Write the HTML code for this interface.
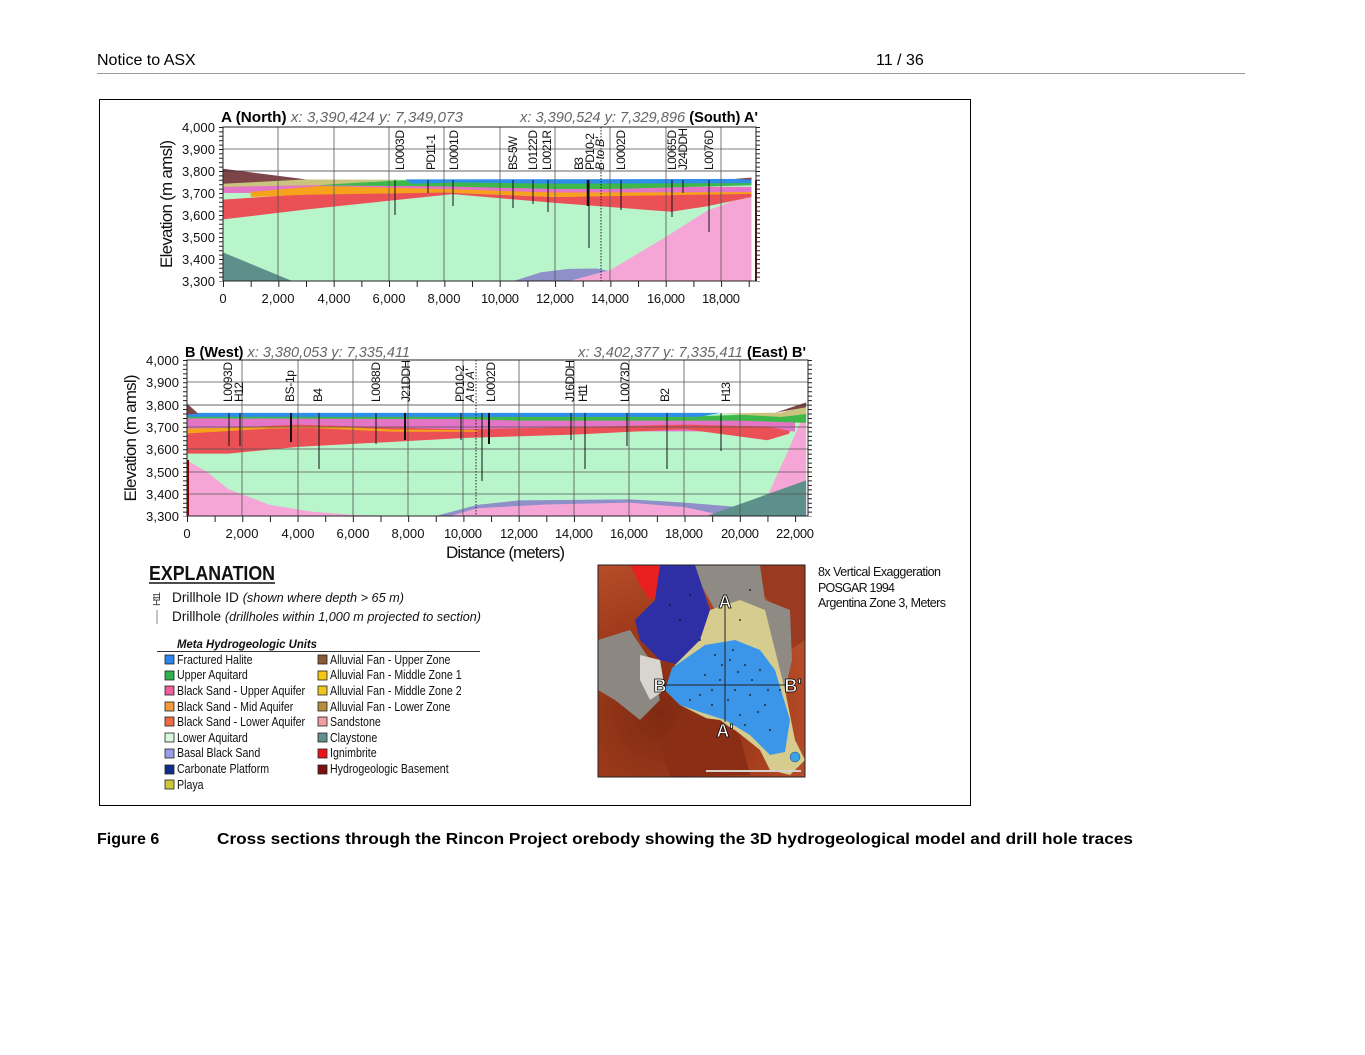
<!DOCTYPE html>
<html><head><meta charset="utf-8"><style>
html,body{margin:0;padding:0;background:#fff;}
svg{display:block;}
text{font-family:"Liberation Sans",sans-serif;}
</style></head><body>
<svg width="1365" height="1055" viewBox="0 0 1365 1055" xmlns="http://www.w3.org/2000/svg">
<rect width="1365" height="1055" fill="#fff"/>
<text x="97" y="65" font-size="16" fill="#000">Notice to ASX</text>
<text x="876" y="65" font-size="16" fill="#000">11 / 36</text>
<line x1="97" y1="73.5" x2="1245" y2="73.5" stroke="#999" stroke-width="1"/>
<rect x="99.5" y="99.5" width="871" height="706" fill="#fff" stroke="#000" stroke-width="1"/>

<!-- TOP CHART -->
<g transform="translate(223,127) scale(0.02767,0.22)">
 <rect x="0" y="240" width="19100" height="460" fill="#b9f5ca"/>
 <polygon points="0,570 0,700 2500,700" fill="#5d8f8b"/>
 <polygon points="10500,700 11500,660 12500,645 13500,643 14000,655 14000,700" fill="#8f8fc9"/>
 <polygon points="12500,700 14000,650 16000,500 17500,380 19100,305 19100,700" fill="#f6a6d6"/>
 <polygon points="0,270 4000,255 8000,268 19100,272 19100,300 0,300" fill="#e474c6"/>
 <polygon points="0,330 3000,305 8000,298 12000,318 19100,300 19100,318 17500,360 16200,385 12000,345 8300,305 6000,335 3000,375 0,420" fill="#ea5055"/>
 <polygon points="1000,295 3500,268 8000,282 12000,298 19100,296 19100,304 12000,318 8000,298 3000,308 1000,318" fill="#f6a21a"/>
 <polygon points="3500,262 6500,242 19100,242 19100,265 14000,282 12000,282 8000,270 6500,268 3500,266" fill="#3cb94a"/>
 <polygon points="6600,238 19100,236 19100,255 12000,258 8500,252 6800,258" fill="#2f8fe8"/>
 <polygon points="0,258 2500,238 6500,240 3500,264 0,272" fill="#c9c47e"/>
 <polygon points="0,190 3000,238 0,258" fill="#7d4548"/>
 <polygon points="18500,236 19100,230 19100,240" fill="#7d4548"/>
</g>
<g stroke="#555" stroke-width="0.8">
 <line x1="223" y1="149" x2="756" y2="149"/>
 <line x1="223" y1="171" x2="756" y2="171" stroke="#333"/>
 <line x1="278" y1="127" x2="278" y2="281"/><line x1="334" y1="127" x2="334" y2="281"/>
 <line x1="389" y1="127" x2="389" y2="281"/><line x1="444" y1="127" x2="444" y2="281"/>
 <line x1="500" y1="127" x2="500" y2="281"/><line x1="555" y1="127" x2="555" y2="281"/>
 <line x1="610" y1="127" x2="610" y2="281"/><line x1="666" y1="127" x2="666" y2="281"/>
 <line x1="721" y1="127" x2="721" y2="281"/>
</g>
<g stroke="#111" stroke-width="1">
 <line x1="395" y1="180" x2="395" y2="215"/><line x1="428" y1="180" x2="428" y2="193"/>
 <line x1="453" y1="180" x2="453" y2="206"/><line x1="513" y1="180" x2="513" y2="208"/>
 <line x1="533" y1="180" x2="533" y2="204"/><line x1="548" y1="180" x2="548" y2="212"/>
 <line x1="588" y1="180" x2="588" y2="206" stroke-width="2.5"/><line x1="589" y1="180" x2="589" y2="248"/>
 <line x1="621" y1="180" x2="621" y2="210"/><line x1="672" y1="180" x2="672" y2="217"/>
 <line x1="683" y1="180" x2="683" y2="193"/><line x1="709" y1="180" x2="709" y2="232"/>
 <line x1="756" y1="180" x2="756" y2="281" stroke="#8b0000" stroke-width="2"/>
</g>
<line x1="601" y1="127" x2="601" y2="281" stroke="#222" stroke-width="1" stroke-dasharray="1.5 1.5"/>
<rect x="223" y="127" width="533" height="154" fill="none" stroke="#222" stroke-width="1"/>
<line x1="221" y1="127" x2="221" y2="281.5" stroke="#222" stroke-width="4" stroke-dasharray="1 3.4"/>
<line x1="758" y1="127" x2="758" y2="281.5" stroke="#222" stroke-width="4" stroke-dasharray="1 3.4"/>
<line x1="223" y1="284" x2="760" y2="284" stroke="#222" stroke-width="6" stroke-dasharray="1 26.67"/>
<g font-size="13" fill="#111" text-anchor="end">
 <text x="215" y="132" textLength="33">4,000</text><text x="215" y="154" textLength="33">3,900</text><text x="215" y="176" textLength="33">3,800</text>
 <text x="215" y="198" textLength="33">3,700</text><text x="215" y="220" textLength="33">3,600</text><text x="215" y="242" textLength="33">3,500</text>
 <text x="215" y="264" textLength="33">3,400</text><text x="215" y="286" textLength="33">3,300</text>
</g>
<g font-size="13" fill="#111" text-anchor="middle">
 <text x="223" y="303">0</text><text x="278" y="303" textLength="33">2,000</text><text x="334" y="303" textLength="33">4,000</text>
 <text x="389" y="303" textLength="33">6,000</text><text x="444" y="303" textLength="33">8,000</text><text x="500" y="303" textLength="38">10,000</text>
 <text x="555" y="303" textLength="38">12,000</text><text x="610" y="303" textLength="38">14,000</text><text x="666" y="303" textLength="38">16,000</text>
 <text x="721" y="303" textLength="38">18,000</text>
</g>
<text transform="translate(172,204) rotate(-90)" font-size="17" text-anchor="middle" fill="#111" textLength="128">Elevation (m amsl)</text>
<text x="221" y="122" font-size="15" fill="#000" textLength="242" lengthAdjust="spacingAndGlyphs"><tspan font-weight="bold">A (North)</tspan><tspan fill="#666" font-style="italic"> x: 3,390,424   y: 7,349,073</tspan></text>
<text x="520" y="122" font-size="15" fill="#000" textLength="238" lengthAdjust="spacingAndGlyphs"><tspan fill="#666" font-style="italic">x: 3,390,524   y: 7,329,896 </tspan><tspan font-weight="bold">(South) A'</tspan></text>
<g font-size="12" fill="#111" lengthAdjust="spacingAndGlyphs">
 <text transform="translate(404,170) rotate(-90)" textLength="40">L0003D</text>
 <text transform="translate(435,170) rotate(-90)" textLength="36">PD11-1</text>
 <text transform="translate(458,170) rotate(-90)" textLength="40">L0001D</text>
 <text transform="translate(517,170) rotate(-90)" textLength="34">BS-5W</text>
 <text transform="translate(537,170) rotate(-90)" textLength="40">L0122D</text>
 <text transform="translate(551,170) rotate(-90)" textLength="40">L0021R</text>
 <text transform="translate(583,170) rotate(-90)" textLength="13">B3</text>
 <text transform="translate(594,170) rotate(-90)" textLength="37">PD10-2</text>
 <text transform="translate(604,170) rotate(-90)" font-style="italic" textLength="33">B to B'</text>
 <text transform="translate(625,170) rotate(-90)" textLength="40">L0002D</text>
 <text transform="translate(676,170) rotate(-90)" textLength="40">L0065D</text>
 <text transform="translate(687,170) rotate(-90)" textLength="42">J24DDH</text>
 <text transform="translate(713,170) rotate(-90)" textLength="40">L0076D</text>
</g>

<!-- BOTTOM CHART -->
<g transform="translate(187,360) scale(0.02764,0.2229)">
 <rect x="0" y="240" width="22400" height="460" fill="#b9f5ca"/>
 <polygon points="0,450 700,500 1500,580 3000,650 4500,680 6000,695 8000,700 0,700" fill="#f6a6d6"/>
 <polygon points="9000,700 10500,650 12000,630 16000,625 18000,640 20000,660 20500,700" fill="#8f8fc9"/>
 <polygon points="9500,700 10500,665 13000,648 16000,640 18000,660 19500,700" fill="#f6a6d6"/>
 <polygon points="20400,700 21000,610 21700,420 22400,220 22400,700" fill="#f6a6d6"/>
 <polygon points="18800,700 22400,540 22400,700" fill="#5d8f8b"/>
 <polygon points="0,255 22000,258 22000,320 0,320" fill="#e474c6"/>
 <polygon points="0,312 4000,290 10000,312 18000,290 21000,298 21800,318 21800,330 21000,360 18000,310 14000,335 10000,350 4000,390 1500,420 0,420" fill="#ea5055"/>
 <polygon points="0,308 3000,300 5000,298 7500,312 10500,315 10500,322 7500,322 4500,305 3000,308 0,330" fill="#f6a21a"/>
 <polygon points="0,250 19000,250 21500,240 22400,235 22400,282 20000,272 12000,272 10000,265 0,262" fill="#3cb94a"/>
 <polygon points="0,237 19300,237 18500,255 0,255" fill="#2f8fe8"/>
 <polygon points="19300,240 21500,236 22400,205 22400,242 21500,256" fill="#c9c47e"/>
 <polygon points="21300,236 22400,190 22400,212" fill="#7d4548"/>
 <polygon points="0,195 400,240 0,245" fill="#7d4548"/>
</g>
<g stroke="#555" stroke-width="0.8">
 <line x1="187" y1="382" x2="808" y2="382"/>
 <line x1="187" y1="405" x2="808" y2="405" stroke="#333"/>
 <line x1="187" y1="427" x2="808" y2="427"/><line x1="187" y1="449" x2="808" y2="449"/>
 <line x1="187" y1="472" x2="808" y2="472"/><line x1="187" y1="494" x2="808" y2="494"/>
 <line x1="242" y1="360" x2="242" y2="516"/><line x1="298" y1="360" x2="298" y2="516"/>
 <line x1="353" y1="360" x2="353" y2="516"/><line x1="408" y1="360" x2="408" y2="516"/>
 <line x1="463" y1="360" x2="463" y2="516"/><line x1="519" y1="360" x2="519" y2="516"/>
 <line x1="574" y1="360" x2="574" y2="516"/><line x1="629" y1="360" x2="629" y2="516"/>
 <line x1="684" y1="360" x2="684" y2="516"/><line x1="740" y1="360" x2="740" y2="516"/>
</g>
<g stroke="#111" stroke-width="1">
 <line x1="229" y1="413" x2="229" y2="446"/><line x1="240" y1="413" x2="240" y2="446"/>
 <line x1="291" y1="413" x2="291" y2="442" stroke-width="2"/><line x1="319" y1="413" x2="319" y2="469"/>
 <line x1="376" y1="413" x2="376" y2="444"/><line x1="405" y1="413" x2="405" y2="440" stroke-width="2"/>
 <line x1="461" y1="413" x2="461" y2="440"/><line x1="482" y1="413" x2="482" y2="481"/>
 <line x1="489" y1="413" x2="489" y2="444" stroke-width="2"/><line x1="571" y1="413" x2="571" y2="440"/>
 <line x1="585" y1="413" x2="585" y2="469"/><line x1="627" y1="413" x2="627" y2="446"/>
 <line x1="667" y1="413" x2="667" y2="469"/><line x1="721" y1="413" x2="721" y2="451"/>
 <line x1="188" y1="460" x2="188" y2="516" stroke="#8b0000" stroke-width="2"/>
</g>
<line x1="476" y1="360" x2="476" y2="516" stroke="#222" stroke-width="1" stroke-dasharray="1.5 1.5"/>
<rect x="187" y="360" width="621" height="156" fill="none" stroke="#222" stroke-width="1"/>
<line x1="185" y1="360" x2="185" y2="516.5" stroke="#222" stroke-width="4" stroke-dasharray="1 3.46"/>
<line x1="810" y1="360" x2="810" y2="516.5" stroke="#222" stroke-width="4" stroke-dasharray="1 3.46"/>
<line x1="187" y1="519" x2="810" y2="519" stroke="#222" stroke-width="6" stroke-dasharray="1 26.64"/>
<g font-size="13" fill="#111" text-anchor="end">
 <text x="179" y="365" textLength="33">4,000</text><text x="179" y="387" textLength="33">3,900</text><text x="179" y="410" textLength="33">3,800</text>
 <text x="179" y="432" textLength="33">3,700</text><text x="179" y="454" textLength="33">3,600</text><text x="179" y="477" textLength="33">3,500</text>
 <text x="179" y="499" textLength="33">3,400</text><text x="179" y="521" textLength="33">3,300</text>
</g>
<g font-size="13" fill="#111" text-anchor="middle">
 <text x="187" y="538">0</text><text x="242" y="538" textLength="33">2,000</text><text x="298" y="538" textLength="33">4,000</text>
 <text x="353" y="538" textLength="33">6,000</text><text x="408" y="538" textLength="33">8,000</text><text x="463" y="538" textLength="38">10,000</text>
 <text x="519" y="538" textLength="38">12,000</text><text x="574" y="538" textLength="38">14,000</text><text x="629" y="538" textLength="38">16,000</text>
 <text x="684" y="538" textLength="38">18,000</text><text x="740" y="538" textLength="38">20,000</text><text x="795" y="538" textLength="38">22,000</text>
</g>
<text x="446" y="558" font-size="17" fill="#111" textLength="119">Distance (meters)</text>
<text transform="translate(136,438) rotate(-90)" font-size="17" text-anchor="middle" fill="#111" textLength="127">Elevation (m amsl)</text>
<text x="185" y="357" font-size="15" fill="#000" textLength="225" lengthAdjust="spacingAndGlyphs"><tspan font-weight="bold">B (West)</tspan><tspan fill="#666" font-style="italic"> x: 3,380,053   y: 7,335,411</tspan></text>
<text x="578" y="357" font-size="15" fill="#000" textLength="228" lengthAdjust="spacingAndGlyphs"><tspan fill="#666" font-style="italic">x: 3,402,377   y: 7,335,411 </tspan><tspan font-weight="bold">(East) B'</tspan></text>
<g font-size="12" fill="#111">
 <text transform="translate(232,402) rotate(-90)" textLength="40">L0093D</text>
 <text transform="translate(243,402) rotate(-90)" textLength="20">H12</text>
 <text transform="translate(294,402) rotate(-90)" textLength="32">BS-1p</text>
 <text transform="translate(322,402) rotate(-90)" textLength="14">B4</text>
 <text transform="translate(380,402) rotate(-90)" textLength="40">L0088D</text>
 <text transform="translate(410,402) rotate(-90)" textLength="42">J21DDH</text>
 <text transform="translate(464,402) rotate(-90)" textLength="37">PD10-2</text>
 <text transform="translate(474,402) rotate(-90)" font-style="italic" textLength="33">A to A'</text>
 <text transform="translate(495,402) rotate(-90)" textLength="40">L0002D</text>
 <text transform="translate(574,402) rotate(-90)" textLength="42">J16DDH</text>
 <text transform="translate(587,402) rotate(-90)" textLength="18">H11</text>
 <text transform="translate(629,402) rotate(-90)" textLength="40">L0073D</text>
 <text transform="translate(669,402) rotate(-90)" textLength="14">B2</text>
 <text transform="translate(730,402) rotate(-90)" textLength="20">H13</text>
</g>

<!-- EXPLANATION -->
<text x="149" y="580" font-size="20" font-weight="bold" fill="#111" textLength="126" lengthAdjust="spacingAndGlyphs">EXPLANATION</text>
<line x1="149" y1="583" x2="275" y2="583" stroke="#111" stroke-width="1.5"/>
<text transform="translate(160,606) rotate(-90)" font-size="10" fill="#333" textLength="14">H11</text>
<line x1="157" y1="610" x2="157" y2="624" stroke="#888" stroke-width="1"/>
<text x="172" y="602" font-size="14" fill="#111" textLength="232" lengthAdjust="spacingAndGlyphs">Drillhole ID <tspan font-style="italic" font-size="13">(shown where depth &gt; 65 m)</tspan></text>
<text x="172" y="621" font-size="14" fill="#111" textLength="309" lengthAdjust="spacingAndGlyphs">Drillhole <tspan font-style="italic" font-size="13">(drillholes within 1,000 m projected to section)</tspan></text>
<text x="177" y="648" font-size="12" font-weight="bold" font-style="italic" fill="#111" textLength="140" lengthAdjust="spacingAndGlyphs">Meta Hydrogeologic Units</text>
<line x1="157" y1="651.5" x2="480" y2="651.5" stroke="#333" stroke-width="1"/>
<g stroke="#222" stroke-width="0.8">
 <rect x="165" y="655" width="9" height="9" fill="#2a86ee"/><rect x="165" y="671" width="9" height="9" fill="#2fb24c"/>
 <rect x="165" y="686" width="9" height="9" fill="#ef5f9c"/><rect x="165" y="702" width="9" height="9" fill="#f59a3a"/>
 <rect x="165" y="717" width="9" height="9" fill="#ee6842"/><rect x="165" y="733" width="9" height="9" fill="#d6f7d8"/>
 <rect x="165" y="749" width="9" height="9" fill="#9a9ee8"/><rect x="165" y="765" width="9" height="9" fill="#0f2e8c"/>
 <rect x="165" y="780" width="9" height="9" fill="#cbc83a"/>
 <rect x="318" y="655" width="9" height="9" fill="#8a5a36"/><rect x="318" y="671" width="9" height="9" fill="#f3c712"/>
 <rect x="318" y="686" width="9" height="9" fill="#f2c51c"/><rect x="318" y="702" width="9" height="9" fill="#b98e3c"/>
 <rect x="318" y="717" width="9" height="9" fill="#f0a0a0"/><rect x="318" y="733" width="9" height="9" fill="#5e918d"/>
 <rect x="318" y="749" width="9" height="9" fill="#e8141a"/><rect x="318" y="765" width="9" height="9" fill="#7d0f10"/>
</g>
<g transform="translate(177,0) scale(0.85,1)" font-size="12.5" fill="#111">
 <text x="0" y="664">Fractured Halite</text><text x="0" y="679">Upper Aquitard</text>
 <text x="0" y="695">Black Sand - Upper Aquifer</text><text x="0" y="711">Black Sand - Mid Aquifer</text>
 <text x="0" y="726">Black Sand - Lower Aquifer</text><text x="0" y="742">Lower Aquitard</text>
 <text x="0" y="757">Basal Black Sand</text><text x="0" y="773">Carbonate Platform</text><text x="0" y="789">Playa</text>
</g>
<g transform="translate(330,0) scale(0.85,1)" font-size="12.5" fill="#111">
 <text x="0" y="664">Alluvial Fan - Upper Zone</text><text x="0" y="679">Alluvial Fan - Middle Zone 1</text>
 <text x="0" y="695">Alluvial Fan - Middle Zone 2</text><text x="0" y="711">Alluvial Fan - Lower Zone</text>
 <text x="0" y="726">Sandstone</text><text x="0" y="742">Claystone</text>
 <text x="0" y="757">Ignimbrite</text><text x="0" y="773">Hydrogeologic Basement</text>
</g>

<!-- MAP -->
<defs><clipPath id="mc"><rect x="598" y="565" width="207" height="212"/></clipPath>
<radialGradient id="rg" cx="0.3" cy="0.7" r="0.8"><stop offset="0" stop-color="#7e2a12"/><stop offset="0.6" stop-color="#a33d1c"/><stop offset="1" stop-color="#b9502c"/></radialGradient></defs>
<g clip-path="url(#mc)">
 <rect x="598" y="565" width="207" height="212" fill="url(#rg)"/>
 <polygon points="630,565 660,565 665,590 650,600 640,585" fill="#e82020"/>
 <polygon points="755,565 805,565 805,640 790,650 775,610 760,590" fill="#9a3a20"/>
 <polygon points="598,640 630,630 650,660 660,700 640,720 615,700 598,690" fill="#8d8782"/>
 <polygon points="640,655 660,660 665,690 650,700 640,680" fill="#d8d4d0"/>
 <polygon points="690,565 760,565 765,600 790,610 792,660 785,690 770,640 740,600 715,610" fill="#8f8a84"/>
 <polygon points="660,565 695,565 710,610 700,640 680,665 660,660 640,640 635,620 655,600" fill="#2e2ea5"/>
 <polygon points="710,610 740,600 765,610 775,650 785,690 795,740 805,760 790,775 770,770 760,750 735,730 710,720 680,705 665,690 675,665 700,640" fill="#d6cc8e"/>
 <polygon points="705,645 735,640 760,650 775,670 790,720 785,752 770,755 750,735 725,720 700,712 680,705 665,690 672,668" fill="#3b96ea"/>
 <polygon points="680,715 720,720 740,735 750,775 670,777 660,745" fill="#8a2f16"/>
 <line x1="725" y1="595" x2="725" y2="722" stroke="#222" stroke-width="1"/>
 <line x1="662" y1="685" x2="790" y2="685" stroke="#222" stroke-width="1"/>
 <line x1="706" y1="771" x2="801" y2="771" stroke="#d8d0cc" stroke-width="2"/>
 <circle cx="795" cy="757" r="5" fill="#3aa0e8" stroke="#246" stroke-width="0.5"/>
 <g fill="#111">
  <circle cx="700" cy="640" r="0.9"/><circle cx="715" cy="655" r="0.9"/><circle cx="730" cy="660" r="0.9"/><circle cx="745" cy="665" r="0.9"/><circle cx="760" cy="670" r="0.9"/>
  <circle cx="705" cy="675" r="0.9"/><circle cx="720" cy="680" r="0.9"/><circle cx="735" cy="690" r="0.9"/><circle cx="750" cy="695" r="0.9"/><circle cx="765" cy="705" r="0.9"/>
  <circle cx="690" cy="700" r="0.9"/><circle cx="712" cy="705" r="0.9"/><circle cx="740" cy="715" r="0.9"/><circle cx="770" cy="730" r="0.9"/><circle cx="680" cy="620" r="0.9"/>
  <circle cx="670" cy="605" r="0.9"/><circle cx="690" cy="595" r="0.9"/><circle cx="750" cy="590" r="0.9"/><circle cx="740" cy="620" r="0.9"/><circle cx="780" cy="690" r="0.9"/>
  <circle cx="722" cy="665" r="0.9"/><circle cx="738" cy="672" r="0.9"/><circle cx="752" cy="680" r="0.9"/><circle cx="712" cy="690" r="0.9"/><circle cx="728" cy="700" r="0.9"/>
  <circle cx="758" cy="712" r="0.9"/><circle cx="745" cy="725" r="0.9"/><circle cx="700" cy="695" r="0.9"/><circle cx="768" cy="690" r="0.9"/><circle cx="733" cy="650" r="0.9"/>
 </g>
 <g font-size="18" fill="#fff" stroke="#000" stroke-width="0.8" text-anchor="middle" font-weight="bold">
  <text x="725" y="608">A</text><text x="725" y="737">A'</text><text x="660" y="692">B</text><text x="793" y="692">B'</text>
 </g>
</g>
<rect x="598" y="565" width="207" height="212" fill="none" stroke="#222" stroke-width="1"/>
<g font-size="12.5" fill="#111" lengthAdjust="spacingAndGlyphs">
 <text x="818" y="576" textLength="123">8x Vertical Exaggeration</text>
 <text x="818" y="592" textLength="77">POSGAR 1994</text>
 <text x="818" y="607" textLength="128">Argentina Zone 3, Meters</text>
</g>

<text x="97" y="844" font-size="16" font-weight="bold" fill="#000">Figure 6</text>
<text x="217" y="844" font-size="16" font-weight="bold" fill="#000" textLength="916" lengthAdjust="spacingAndGlyphs">Cross section<tspan font-style="italic">s</tspan> through the Rincon Project orebody showing the 3D hydrogeological model and drill hole traces</text>
</svg>
</body></html>
